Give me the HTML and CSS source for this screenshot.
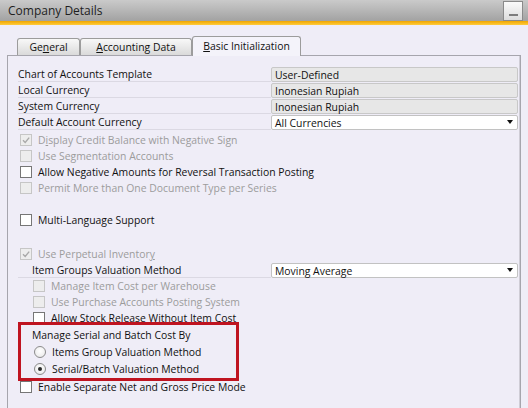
FILE: index.html
```html
<!DOCTYPE html>
<html>
<head>
<meta charset="utf-8">
<link rel="stylesheet" href="styles.css">
</head>
<body>
<div class="titlebar">
  <span class="title">Company Details</span>
  <div class="minbtn"><span></span></div>
</div>
<div class="stripe"></div>
<div class="tabs">
  <div class="tab t1">Ge<u>n</u>eral</div>
  <div class="tab t2"><u>A</u>ccounting Data</div>
  <div class="tab t3 active"><u>B</u>asic Initialization</div>
</div>
<div class="panel">
  <div class="frow"><span class="flabel">Chart of Accounts Template</span><span class="field">User-Defined</span></div>
  <div class="frow"><span class="flabel">Local Currency</span><span class="field">Inonesian Rupiah</span></div>
  <div class="frow"><span class="flabel">System Currency</span><span class="field">Inonesian Rupiah</span></div>
  <div class="frow"><span class="flabel">Default Account Currency</span><span class="field select">All Currencies</span></div>

  <div class="checks">
    <div class="crow dis"><span class="cb"><svg viewBox="0 0 10 10" class="tick"><path d="M2 5.2 L4.2 7.4 L8.2 2.6"/></svg></span><span>D<u>i</u>splay Credit Balance with Negative Sign</span></div>
    <div class="crow dis"><span class="cb"></span><span>Use Segmentation Accounts</span></div>
    <div class="crow"><span class="cb"></span><span>Allow Negative Amounts for Reversal Transaction Posting</span></div>
    <div class="crow dis"><span class="cb"></span><span>Permit More than One Document Type per Series</span></div>
    <div class="blank"></div>
    <div class="crow"><span class="cb"></span><span>Multi-Language Support</span></div>
  </div>

  <div class="inventory">
    <div class="crow dis"><span class="cb"><svg viewBox="0 0 10 10" class="tick"><path d="M2 5.2 L4.2 7.4 L8.2 2.6"/></svg></span><span>Use Perpetual Inventor<u>y</u></span></div>
    <div class="frow"><span class="flabel ind-label">Item Groups Valuation Method</span><span class="field select white">Moving Average</span></div>
    <div class="crow dis ind"><span class="cb"></span><span>Manage Item Cost per Warehouse</span></div>
    <div class="crow dis ind"><span class="cb"></span><span>Use Purchase Accounts Posting System</span></div>
    <div class="crow ind"><span class="cb"></span><span>Allow Stock Release Without Item Cost</span></div>
  </div>

  <div class="serial">
    <div class="slabel">Manage Serial and Batch Cost By</div>
    <div class="rrow"><span class="rb"></span><span>Items Group Valuation Method</span></div>
    <div class="rrow"><span class="rb on"></span><span>Serial/Batch Valuation Method</span></div>
  </div>

  <div class="crow last"><span class="cb"></span><span>Enable Separate Net and Gross Price Mode</span></div>
</div>
<div class="highlight"></div>
</body>
</html>
```
FILE: styles.css
```css
* { box-sizing: border-box; }
html, body { margin: 0; padding: 0; }
body {
  width: 528px;
  height: 408px;
  overflow: hidden;
  position: relative;
  background: #efedf7;
  font-family: "Open Sans", "Noto Sans", sans-serif;
  font-size: 10.4px;
  color: #111;
}
u { text-decoration: underline; text-underline-offset: 1px; }

.titlebar {
  height: 21px;
  display: flex;
  align-items: center;
  justify-content: space-between;
  padding: 0 5px 0 8px;
  background: linear-gradient(#cacaca, #a2a2a2);
}
.title { font-size: 12px; color: #1e1e1e; }
.minbtn {
  width: 20px;
  height: 20px;
  margin-top: 1px;
  border: 1px solid #8a8a8a;
  background: linear-gradient(#fbfbfb, #dcdcdc);
  display: flex;
  align-items: flex-end;
  justify-content: center;
  padding-bottom: 4px;
}
.minbtn span { width: 9px; height: 2px; background: #7c7c7c; }

.stripe { height: 4px; background: linear-gradient(#f0a500, #ffcb3c); }

.tabs {
  display: flex;
  align-items: flex-end;
  height: 30px;
  padding-left: 17px;
}
.tab {
  height: 17px;
  border: 1px solid #9c9c9c;
  border-bottom: none;
  border-radius: 3px 3px 0 0;
  background: linear-gradient(#f8f8f8, #dadada);
  display: flex;
  align-items: center;
  justify-content: center;
  line-height: 14px;
}
.t1 { width: 63px; }
.t2 { width: 112px; }
.t3 { width: 109px; }
.tab.active {
  height: 20px;
  margin-bottom: -1px;
  background: #f4f3fa;
  position: relative;
  z-index: 1;
  padding-bottom: 2px;
}

.panel {
  margin-left: 7px;
  width: 514px;
  height: 353px;
  border: 1px solid #a6a5ad;
  border-bottom: none;
  box-shadow: inset -1px 0 #cfcdd6;
  padding: 10px 0 0 10px;
}

.frow { display: flex; height: 16px; }
.flabel {
  width: 253px;
  height: 16px;
  border-bottom: 1px solid #dbd9e3;
  line-height: 17px;
}
.ind-label { padding-left: 14px; }
.field {
  width: 247px;
  height: 15px;
  margin-top: 1px;
  border: 1px solid #c8c8c8;
  border-radius: 2px;
  background: #e7e7e7;
  padding-left: 3px;
  line-height: 14px;
  position: relative;
}
.field.select { background: #fff; border-color: #c2c2c2; }
.field.select::after {
  content: "";
  position: absolute;
  right: 4px;
  top: 4px;
  border-left: 3.5px solid transparent;
  border-right: 3.5px solid transparent;
  border-top: 4px solid #111;
}

.checks { margin-top: 2px; }
.crow {
  display: flex;
  align-items: center;
  height: 16px;
  padding-left: 2px;
  line-height: 15px;
}
.crow.ind { padding-left: 15px; }
.cb {
  width: 12px;
  height: 12px;
  flex: none;
  margin-right: 6px;
  border: 1px solid #767676;
  background: #fff;
  display: flex;
  align-items: center;
  justify-content: center;
}
.crow.dis { color: #9c9c9c; }
.crow.dis .cb { border-color: #c6c6c6; background: #ededed; }
.tick { width: 10px; height: 10px; }
.tick path { fill: none; stroke: #a9a9a9; stroke-width: 1.4; }
.blank { height: 16px; }

.inventory { margin-top: 18px; }

.serial { margin-top: 1px; }
.slabel { height: 16px; line-height: 16px; padding-left: 14px; }
.rrow {
  display: flex;
  align-items: center;
  height: 17px;
  padding-left: 16px;
}
.rb {
  width: 12px;
  height: 12px;
  flex: none;
  margin-right: 6px;
  border-radius: 50%;
  border: 1px solid #8b8b8b;
  background: radial-gradient(circle at 50% 40%, #ffffff, #e6e6e6);
  display: flex;
  align-items: center;
  justify-content: center;
}
.rb.on::after {
  content: "";
  width: 4px;
  height: 4px;
  border-radius: 50%;
  background: #2a2a2a;
}
.crow.last { margin-top: 2px; }

.highlight {
  position: absolute;
  left: 18px;
  top: 322px;
  width: 221px;
  height: 59px;
  border: 3px solid #bf1420;
}
```
